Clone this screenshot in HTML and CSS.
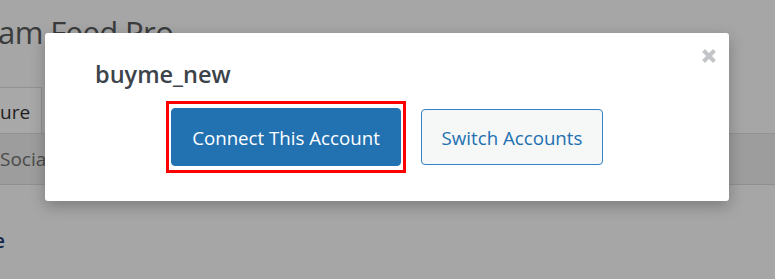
FILE: index.html
```html
<!DOCTYPE html>
<html>
<head>
<meta charset="utf-8">
<link rel="stylesheet" href="styles.css">
</head>
<body>
<div class="page">
  <h1 class="title">am Feed Pro</h1>
  <div class="tabs">
    <div class="tab">ure</div>
  </div>
  <div class="band">Socia</div>
  <div class="section"><a class="link">e</a></div>
</div>
<div class="modal">
  <button class="close" aria-label="Close">
    <svg width="16" height="16" viewBox="0 0 16 16"><path d="M2.5 2.5 L13.5 13.5 M13.5 2.5 L2.5 13.5" stroke="#c3c4c7" stroke-width="4" stroke-linecap="butt"/></svg>
  </button>
  <div class="modal-title">buyme_new</div>
  <div class="actions">
    <div class="highlight">
      <button class="btn btn-primary">Connect This Account</button>
    </div>
    <button class="btn btn-secondary">Switch Accounts</button>
  </div>
</div>
</body>
</html>
```
FILE: styles.css
```css
html, body {
  margin: 0;
  padding: 0;
}
body {
  width: 775px;
  height: 279px;
  overflow: hidden;
  background: #a6a6a6;
  font-family: "Open Sans", "Noto Sans", "Liberation Sans", sans-serif;
  position: relative;
}
.page {
  display: flex;
  flex-direction: column;
}
.title {
  margin: 12px 0 0 -2px;
  font-size: 31px;
  letter-spacing: -0.6px;
  line-height: 40px;
  font-weight: 400;
  color: #3a3b3c;
}
.tabs {
  display: flex;
  margin-top: 35px;
  height: 46px;
}
.tab {
  width: 42px;
  height: 46px;
  box-sizing: border-box;
  border-top: 1px solid #929292;
  border-right: 1px solid #929292;
  background: #a8a8a8;
  font-size: 19px;
  line-height: 48px;
  color: #1f1f1f;
  font-weight: 500;
}
.band {
  height: 52px;
  box-sizing: border-box;
  background: #9d9d9d;
  border-top: 1px solid #929292;
  border-bottom: 1px solid #8f8f8f;
  font-size: 19px;
  line-height: 50px;
  color: #4a4a4a;
}
.section {
  padding-top: 44px;
  font-size: 19px;
  line-height: 24px;
}
.link {
  color: #12264a;
  font-weight: 600;
  margin-left: -6px;
}
.modal {
  position: absolute;
  left: 45px;
  top: 33px;
  width: 684px;
  height: 168px;
  box-sizing: border-box;
  background: #ffffff;
  border-radius: 3px;
  box-shadow: 0 5px 15px rgba(0, 0, 0, 0.25);
  padding: 26px 50px 0;
}
.close {
  position: absolute;
  top: 15px;
  right: 12px;
  border: 0;
  background: none;
  padding: 0;
  width: 16px;
  height: 16px;
  display: flex;
}
.modal-title {
  font-size: 23.5px;
  line-height: 31px;
  font-weight: 600;
  color: #3c434a;
}
.actions {
  display: flex;
  justify-content: center;
  align-items: center;
  gap: 15px;
  margin-top: 11px;
  margin-left: -50px;
  margin-right: -50px;
  padding-right: 5px;
}
.highlight {
  border: 3px solid #ff0000;
  padding: 4px 2px;
  display: flex;
}
.btn {
  font-family: inherit;
  font-size: 18.7px;
  border-radius: 4px;
  padding: 0;
  box-sizing: border-box;
  cursor: pointer;
}
.btn-primary {
  height: 58px;
  width: 230px;
  background: #2271b1;
  border: 1px solid #2271b1;
  color: #ffffff;
}
.btn-secondary {
  height: 56px;
  width: 182px;
  background: #f6f7f7;
  border: 1px solid #3582c4;
  color: #2271b1;
}
```
